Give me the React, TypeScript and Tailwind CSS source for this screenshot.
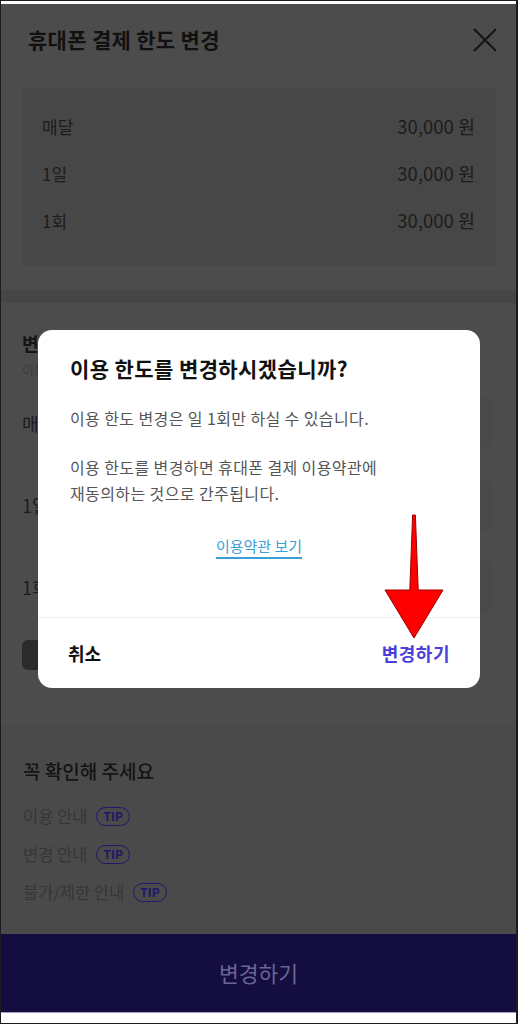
import React from 'react';

const limits = [
  { label: '매달', value: '30,000 원' },
  { label: '1일', value: '30,000 원' },
  { label: '1회', value: '30,000 원' },
];

const tips = ['이용 안내', '변경 안내', '불가/제한 안내'];

function CloseIcon() {
  return (
    <svg width="24" height="24" viewBox="0 0 24 24" fill="none">
      <path d="M1 1L23 23M23 1L1 23" stroke="#141414" strokeWidth="2" />
    </svg>
  );
}

function RedArrow() {
  return (
    <svg className="absolute left-[380px] top-[512px]" width="70" height="130" viewBox="0 0 70 130">
      <path
        d="M32.6 3 L35.4 3 L38.2 78 L63 78 L34 126 L5 78 L29.8 78 Z"
        fill="#ff0000"
        stroke="#9b0000"
        strokeWidth="1"
        strokeLinejoin="round"
      />
    </svg>
  );
}

function ConfirmDialog() {
  return (
    <div className="absolute left-[38px] top-[330px] w-[442px] h-[358px] bg-white rounded-[14px] flex flex-col overflow-hidden">
      <div className="h-[287px] px-8 pt-6">
        <h2 className="text-[21px] leading-[28px] font-bold tracking-[0.4px] text-[#111]">이용 한도를 변경하시겠습니까?</h2>
        <p className="mt-[23px] text-[16px] leading-[26px] tracking-[0.4px] text-[#555]">이용 한도 변경은 일 1회만 하실 수 있습니다.</p>
        <p className="mt-[23px] text-[16px] leading-[26px] tracking-[0.4px] text-[#555]">
          이용 한도를 변경하면 휴대폰 결제 이용약관에
          <br />
          재동의하는 것으로 간주됩니다.
        </p>
        <div className="mt-[29px] flex justify-center">
          <span className="text-[15px] leading-[22px] text-[#3a9fd6] border-b-2 border-[#3a9fd6]">이용약관 보기</span>
        </div>
      </div>
      <div className="flex-1 border-t border-[#eeeeee] px-[30px] flex items-center justify-between">
        <button className="text-[18px] font-bold text-[#111]">취소</button>
        <button className="text-[18px] font-bold tracking-[0.5px] text-[#4b3fdc]">변경하기</button>
      </div>
    </div>
  );
}

export default function App() {
  return (
    <div className="relative w-[518px] h-[1024px] bg-[#1c1c1c] pt-px pb-px pl-px pr-[2px] flex flex-col overflow-hidden font-['Noto_Sans_CJK_KR','Noto_Sans',sans-serif]">
      <div className="h-[3px] bg-white" />

      <div className="h-[930px] flex flex-col bg-[#4c4c4c]">
        {/* header */}
        <div className="h-[72px] flex items-center justify-between pl-[27px] pr-[19px]">
          <h1 className="text-[21px] font-bold tracking-[0.3px] text-[#111]">휴대폰 결제 한도 변경</h1>
          <CloseIcon />
        </div>

        {/* current limits */}
        <div className="mt-3 ml-[21px] mr-[20px] h-[177px] bg-[#474747] pt-[15px] px-5">
          {limits.map((row) => (
            <div key={row.label} className="h-[47px] flex items-center justify-between text-[#1c1c1c]">
              <span className="text-[17px]">{row.label}</span>
              <span className="pr-px text-[18.5px]">{row.value}</span>
            </div>
          ))}
        </div>

        <div className="mt-[25px] h-[13px] bg-[#464646]" />

        {/* new limits */}
        <div className="h-[421px] pt-[28px] pl-[21px] pr-[24px]">
          <h3 className="text-[18px] leading-[24px] font-bold text-[#141414]">변경할 한도</h3>
          <p className="mt-[6px] text-[13px] leading-[18px] text-[#3c3c3c]">이용 한도 설정</p>
          <div className="mt-[18px] flex flex-col gap-[30px]">
            {limits.map((row) => (
              <div key={row.label} className="h-[52px] flex items-center">
                <span className="w-[70px] text-[18px] text-[#1c1c1c]">{row.label}</span>
                <div className="flex-1 h-full rounded-md bg-[#494949]" />
              </div>
            ))}
          </div>
          <div className="mt-[27px] w-[80px] h-[30px] rounded-md bg-[#2b2b2b]" />
        </div>

        {/* notice */}
        <div className="flex-1 bg-[#4a4a4a] pt-[35px] px-[22px]">
          <h3 className="text-[19px] leading-[24px] font-medium text-[#141414]">꼭 확인해 주세요</h3>
          <ul className="mt-[21px] flex flex-col gap-[14px]">
            {tips.map((t) => (
              <li key={t} className="h-[24px] flex items-center gap-[9px] text-[16.5px] text-[#363636]">
                <span>{t}</span>
                <span className="h-[19px] px-[6px] rounded-full border-[1.5px] border-[#22166a] text-[12px] font-bold leading-none text-[#22166a] flex items-center">
                  TIP
                </span>
              </li>
            ))}
          </ul>
        </div>
      </div>

      <button className="h-[78px] bg-[#140d40] text-[21.5px] text-[#6a6592]">변경하기</button>
      <div className="h-px bg-[#a49dc4]" />
      <div className="h-[10px] bg-white" />

      <ConfirmDialog />
      <RedArrow />
    </div>
  );
}
